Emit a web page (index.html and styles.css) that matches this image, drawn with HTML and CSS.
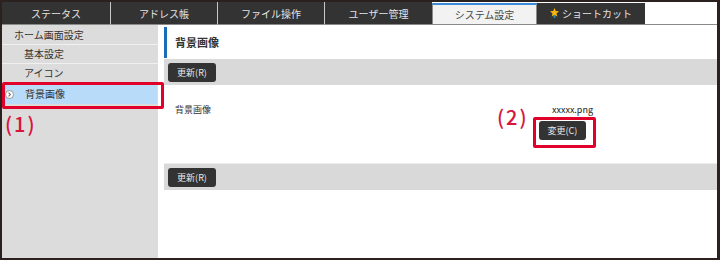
FILE: index.html
```html
<!DOCTYPE html>
<html>

<head>
    <meta charset="utf-8">
    <title>システム設定</title>
    <link rel="stylesheet" href="styles.css">
</head>

<body>
    <div class="frame">
        <div class="tabs">
            <div class="tab w108">ステータス</div>
            <div class="tab">アドレス帳</div>
            <div class="tab">ファイル操作</div>
            <div class="tab w108">ユーザー管理</div>
            <div class="tab active w105">システム設定</div>
            <div class="tab w108 shortcut">
                <svg class="star" width="9" height="10" viewBox="0 0 9 10">
                    <polygon points="4.5,0 5.8,3 9,3.3 6.5,5.4 7.3,8.6 4.5,6.9 1.7,8.6 2.5,5.4 0,3.3 3.2,3" fill="#f5b70c"/>
                    <rect x="3.6" y="7" width="1.8" height="3" fill="#2a8fb8"/>
                </svg>
                ショートカット
            </div>
            <div class="tab-rest"></div>
        </div>

        <div class="content">
            <ul class="side">
                <li>ホーム画面設定</li>
                <li class="sub">基本設定</li>
                <li class="sub">アイコン</li>
                <li class="sub selected">
                    <span class="chev">
                        <svg width="9" height="9" viewBox="0 0 9 9">
                            <circle cx="4.5" cy="4.5" r="4" fill="#ffffff" stroke="#8c8c8c" stroke-width="0.9"/>
                            <path d="M3.6 2.6 L5.4 4.5 L3.6 6.4" fill="none" stroke="#777" stroke-width="1.2"/>
                        </svg>
                    </span>
                    背景画像
                </li>
            </ul>

            <div class="main">
                <div class="page-title">背景画像</div>
                <div class="band">
                    <button class="btn">更新(R)</button>
                </div>
                <div class="row">
                    <div class="label">背景画像</div>
                    <div class="value">
                        <div class="filename">xxxxx.png</div>
                        <button class="btn">変更(C)</button>
                    </div>
                </div>
                <div class="band bottom">
                    <button class="btn">更新(R)</button>
                </div>
            </div>
        </div>

        <!-- callouts -->
        <div class="mark mark-side"></div>
        <div class="num num-1">(1)</div>
        <div class="mark mark-btn"></div>
        <div class="num num-2">(2)</div>
    </div>
</body>

</html>
```

FILE: styles.css
```css
body {
    margin: 0;
    font-family: 'Noto Sans CJK JP', 'Noto Sans', sans-serif;
    background-color: #ffffff;
}

.frame {
    position: relative;
    width: 720px;
    height: 260px;
    box-sizing: border-box;
    border: 2px solid #2b2220;
    border-right-width: 3px;
    background-color: #ffffff;
    display: flex;
    flex-direction: column;
}

.tabs {
    display: flex;
    height: 23px;
    flex-shrink: 0;
}

.tab {
    width: 107px;
    background-color: #333333;
    color: #e4e4e4;
    font-size: 10px;
    display: flex;
    align-items: center;
    justify-content: center;
    border-left: 1px solid #c8c8c8;
    box-sizing: border-box;
    border-bottom: 1px solid #8a8a8a;
}

.tab:first-child {
    border-left: none;
}

.tab.w108 {
    width: 108px;
}

.tab.w105 {
    width: 105px;
}

.tab.active {
    background-color: #f2f2f2;
    color: #444444;
    border-top: 2px solid #3b8bd8;
    border-left: 1px solid #8a8a8a;
    border-right: 1px solid #8a8a8a;
    margin-top: 1px;
}

.tab.shortcut {
    border-left: none;
    margin-top: 1px;
    gap: 3px;
}

.star {
    margin-top: -2px;
}

.tab-rest {
    flex: 1;
    border-bottom: 1px solid #8a8a8a;
}

.content {
    display: flex;
    flex: 1;
}

.side {
    width: 156px;
    margin: 0;
    padding: 1px 0 0 0;
    list-style: none;
    background-color: #dcdcdc;
    font-size: 10px;
    color: #333333;
}

.side li {
    height: 18px;
    line-height: 18px;
    padding-left: 12px;
    border-bottom: 1px solid #f0f0f0;
}

.side li.sub {
    padding-left: 22px;
}

.side li.selected {
    position: relative;
    height: 20px;
    line-height: 20px;
    margin: 1px 1px 0 1px;
    background-color: #b8dbf9;
    border-bottom: none;
}

.chev {
    position: absolute;
    left: 2px;
    top: 6px;
    display: flex;
}

.main {
    flex: 1;
    padding-left: 6px;
}

.page-title {
    margin-top: 2px;
    height: 31px;
    border-left: 3px solid #1c6db8;
    padding-left: 8px;
    font-size: 11px;
    font-weight: bold;
    color: #333333;
    line-height: 31px;
}

.band {
    height: 26px;
    background-color: #d9d9d9;
    padding: 4px 0 0 4px;
    box-sizing: border-box;
    margin-top: 1px;
}

.band.bottom {
    height: 27px;
    margin-top: 0;
    border-top: 1px solid #ececec;
}

.btn {
    display: block;
    width: 48px;
    height: 19px;
    padding: 0;
    border: none;
    border-radius: 3px;
    background-color: #333333;
    color: #e8e8e8;
    font-family: 'Noto Sans CJK JP', 'Noto Sans', sans-serif;
    font-size: 9px;
}

.row {
    height: 78px;
    display: flex;
    padding-left: 11px;
    font-size: 9px;
    color: #333333;
}

.label {
    width: 364px;
    padding-top: 18px;
}

.value {
    padding-top: 18px;
}

.filename {
    margin-left: 13px;
    color: #222222;
    line-height: 13px;
    margin-bottom: 5px;
}

.value .btn {
    width: 47px;
}

.mark {
    position: absolute;
    border: 3px solid #e0002a;
    border-radius: 2px;
}

.mark-side {
    left: 0;
    top: 80px;
    width: 156px;
    height: 21px;
}

.mark-btn {
    left: 531px;
    top: 115px;
    width: 57px;
    height: 25px;
}

.num {
    position: absolute;
    color: #d9143b;
    font-size: 20px;
    font-weight: 500;
    line-height: 20px;
    letter-spacing: 2px;
}

.num-1 {
    left: 3px;
    top: 112px;
}

.num-2 {
    left: 495px;
    top: 105px;
}
```
